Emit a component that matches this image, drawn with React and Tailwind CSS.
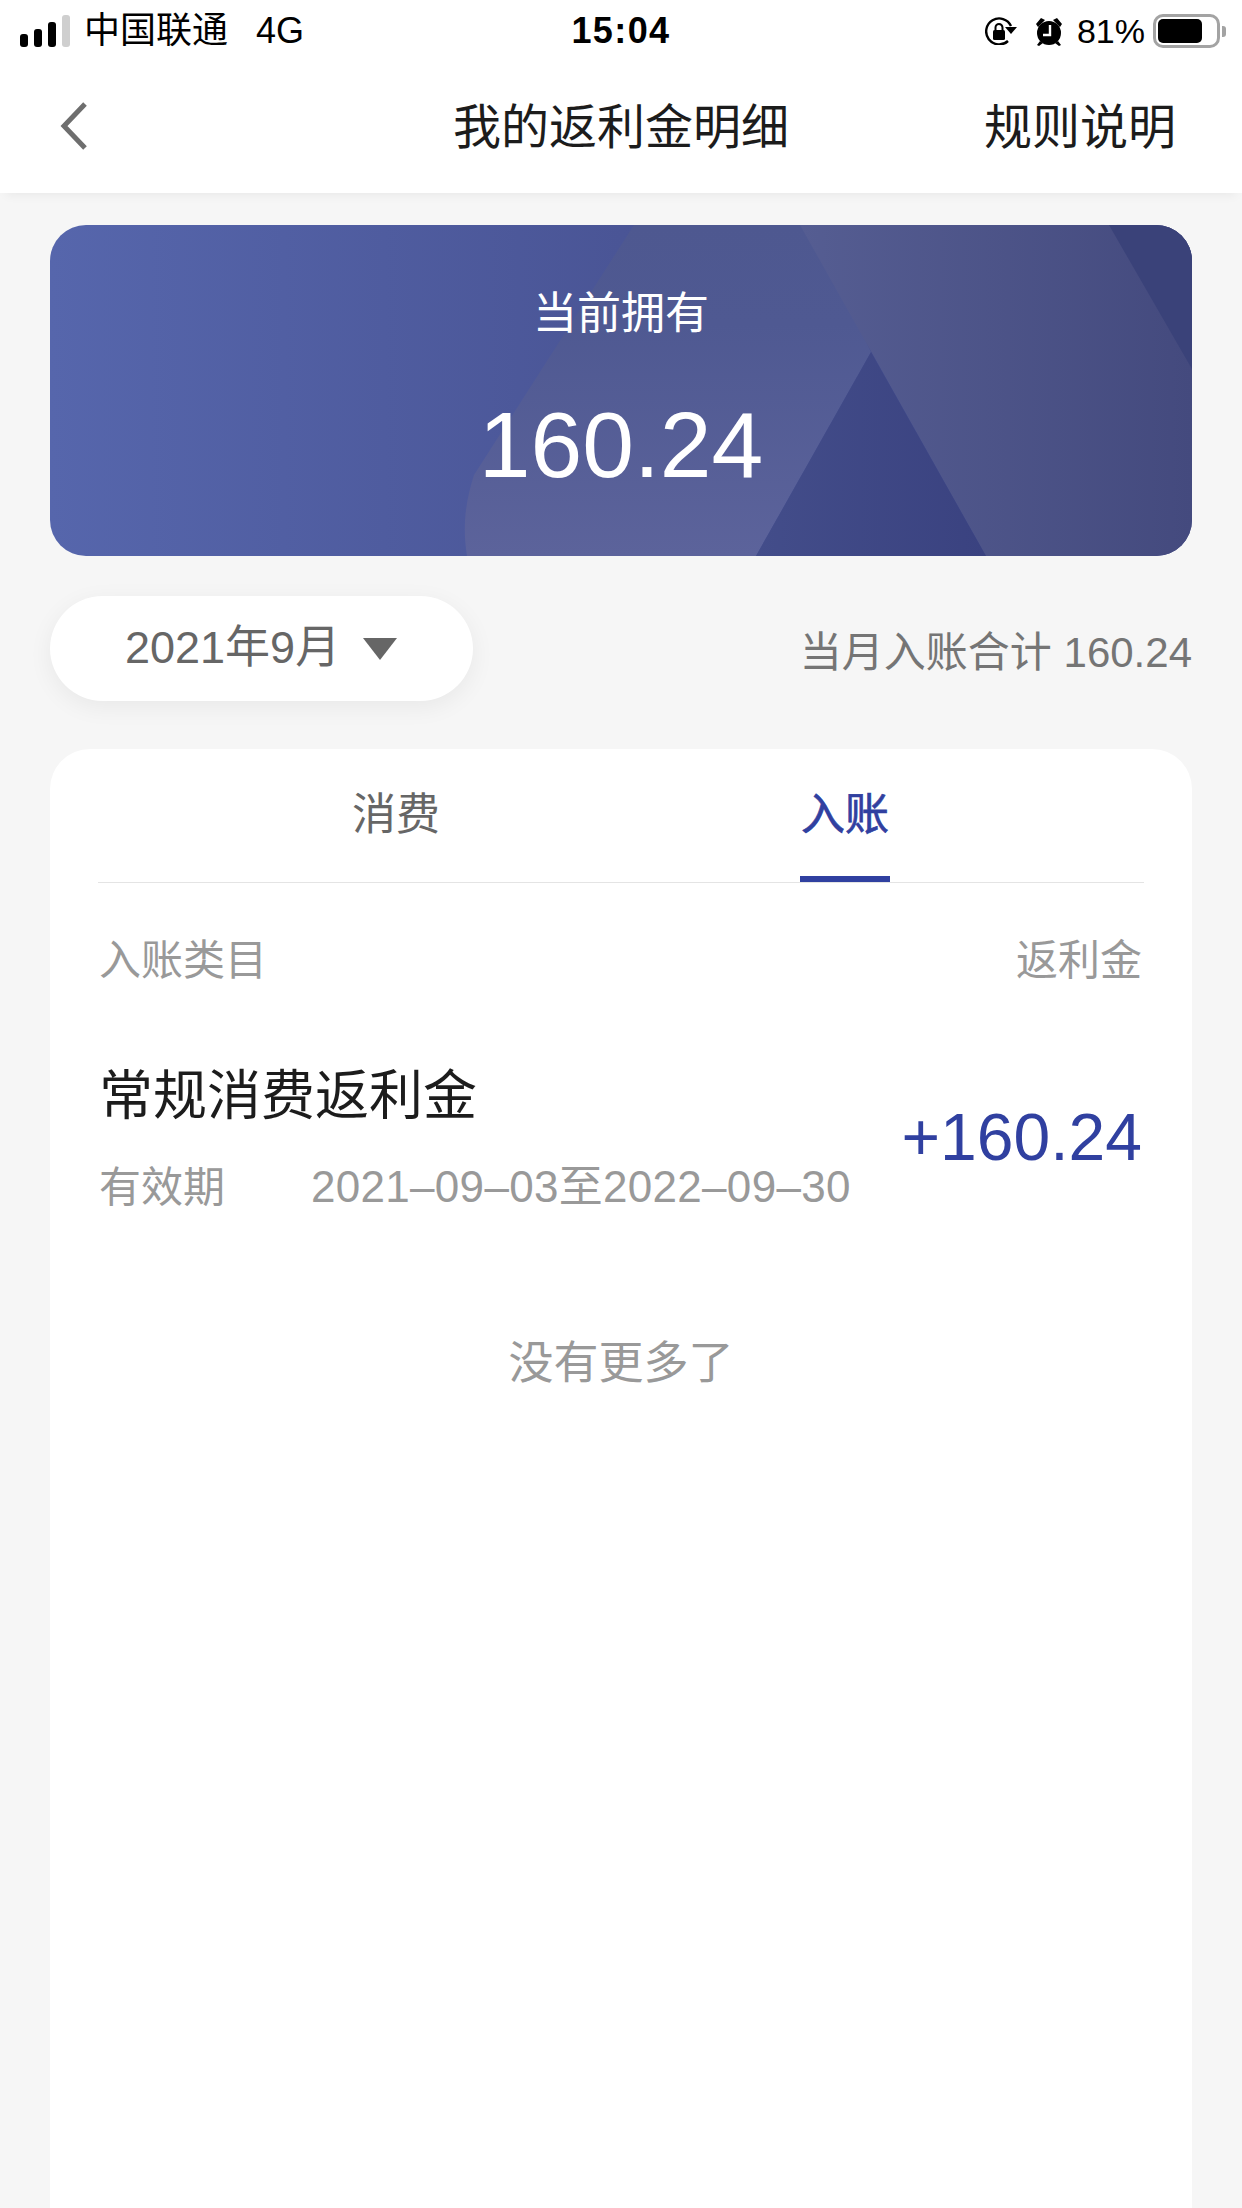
import React from 'react';

const cjk = { fontFamily: '"Liberation Sans", "Noto Sans CJK SC", sans-serif' };

const StatusBar = () => (
    <div className="h-[62px] bg-white grid grid-cols-[1fr_auto_1fr] items-center text-black text-[36px] leading-none">
        <div className="flex items-center">
            <div className="flex items-end gap-[6px] ml-[20px] h-[32px]">
                <span className="w-[8px] h-[13px] rounded-[3px] bg-black" />
                <span className="w-[8px] h-[18px] rounded-[3px] bg-black" />
                <span className="w-[8px] h-[25px] rounded-[3px] bg-black" />
                <span className="w-[8px] h-[32px] rounded-[3px] bg-[#cfcfcf]" />
            </div>
            <span className="ml-[14px]">中国联通</span>
            <span className="ml-[28px]">4G</span>
        </div>
        <span className="font-bold tracking-[1.4px]">15:04</span>
        <div className="flex items-center justify-end mr-[16px]">
            <svg width="32" height="28" viewBox="0 0 32 28" fill="none">
                <path d="M23 24A13 13 0 1 1 26 9" stroke="#000" strokeWidth="2.4" />
                <path d="M20 10h12l-6 7z" fill="#000" />
                <rect x="8" y="13" width="12" height="10" rx="1.5" fill="#000" />
                <path d="M10.5 13v-2.5a3.5 3.5 0 0 1 7 0V13" stroke="#000" strokeWidth="2" />
            </svg>
            <svg className="ml-[18px]" width="28" height="29" viewBox="0 0 28 29">
                <circle cx="14" cy="16" r="12" fill="#000" />
                <path d="M1 7l5-6 4 2-7 7zM27 7l-5-6-4 2 7 7zM5 24l-3 4 2 1 4-3zM23 24l3 4-2 1-4-3z" fill="#000" />
                <path d="M15 8v10H8" stroke="#fff" strokeWidth="2.4" fill="none" />
            </svg>
            <span className="ml-[14px] text-[34px]">81%</span>
            <div className="ml-[8px] w-[67px] h-[34px] rounded-[10px] border-[3px] border-[#a3a3a3] p-[2px]">
                <div className="w-[44px] h-full rounded-[5px] bg-black" />
            </div>
            <span className="ml-[2px] w-[4px] h-[11px] rounded-r-[3px] bg-[#a3a3a3]" />
        </div>
    </div>
);

const NavBar = () => (
    <div className="h-[131px] bg-white grid grid-cols-[1fr_auto_1fr] items-center text-[48px] leading-none text-[#1c1c1c] shadow-[0_8px_10px_-6px_rgba(0,0,0,0.06)]">
        <svg className="ml-[60px] mb-[3px]" width="28" height="50" viewBox="0 0 28 50" fill="none">
            <path d="M25 3L4 25l21 22" stroke="#6e6e6e" strokeWidth="5" />
        </svg>
        <span>我的返利金明细</span>
        <span className="justify-self-end mr-[66px]">规则说明</span>
    </div>
);

const BalanceCard = () => (
    <div className="relative h-[331px] mx-[50px] mt-[32px] rounded-[36px] overflow-hidden bg-gradient-to-r from-[#5666ac] via-[#4a5596] to-[#3b4585] text-white text-center">
        <svg className="absolute inset-0" width="1142" height="331" viewBox="0 0 1142 331" preserveAspectRatio="none">
            <defs>
                <linearGradient id="lightA" x1="0" x2="0" y1="1" y2="0">
                    <stop offset="0" stopColor="#5c639b" />
                    <stop offset="0.7" stopColor="#4f5992" />
                    <stop offset="1" stopColor="#4e5890" />
                </linearGradient>
                <linearGradient id="lightB" x1="0" x2="1" y1="0" y2="0">
                    <stop offset="0" stopColor="#555d92" />
                    <stop offset="1" stopColor="#444a7e" />
                </linearGradient>
                <linearGradient id="darkA" x1="0" x2="1" y1="0" y2="0">
                    <stop offset="0" stopColor="#434d8a" />
                    <stop offset="1" stopColor="#3a4280" />
                </linearGradient>
            </defs>
            <path d="M584 0H760L821 127L706 331H417C412 300 416 275 424 250Z" fill="url(#lightA)" />
            <path d="M750 0H1142V331H936Z" fill="url(#lightB)" />
            <path d="M821 127L936 331H706Z" fill="url(#darkA)" />
            <path d="M1059 0H1142V144Z" fill="#3a4279" />
        </svg>
        <div className="relative flex flex-col items-center">
            <span className="mt-[67px] text-[44px] leading-none">当前拥有</span>
            <span className="mt-[63px] text-[93px] leading-none">160.24</span>
        </div>
    </div>
);

const MonthRow = () => (
    <div className="flex items-center justify-between mx-[50px] mt-[40px]">
        <div className="w-[423px] h-[105px] rounded-full bg-white shadow-[0_6px_24px_rgba(0,0,0,0.06)] flex items-center pl-[75px] pb-[3px] text-[#666] text-[45px] leading-none">
            2021年9月
            <svg className="ml-[22px] mt-[3px]" width="36" height="24" viewBox="0 0 36 24">
                <path d="M1 1h34L18 23z" fill="#666" />
            </svg>
        </div>
        <span className="text-[42px] leading-none text-[#757575] pt-[8px]">当月入账合计 160.24</span>
    </div>
);

const DetailPanel = () => (
    <div className="mx-[50px] mt-[48px] h-[1459px] bg-white rounded-t-[40px] px-[48px]">
        <div className="flex h-[134px] px-[73px] border-b border-[#e4e4e4] text-[44px] leading-none">
            <div className="flex-1 flex justify-center pt-[44px] text-[#666]">消费</div>
            <div className="flex-1 flex justify-center">
                <div className="w-[90px] h-[133px] mr-[2px] pt-[44px] text-center text-[#3040a0] [-webkit-text-stroke:0.7px_#3040a0] border-b-[6px] border-[#3040a0]">入账</div>
            </div>
        </div>
        <div className="flex justify-between text-[42px] leading-none text-[#999] pt-[57px] pl-[1px] pr-[2px]">
            <span>入账类目</span>
            <span>返利金</span>
        </div>
        <div className="flex items-center justify-between mt-[87px] pl-[1px]">
            <div>
                <div className="text-[54px] leading-none text-[#1c1c1c]">常规消费返利金</div>
                <div className="flex items-baseline text-[42px] leading-none text-[#999] mt-[42px]">
                    <span className="w-[212px]">有效期</span>
                    <span className="text-[44px] tracking-[0.3px]">2021–09–03至2022–09–30</span>
                </div>
            </div>
            <span className="text-[66px] leading-none text-[#3040a0] mr-[2px] mb-[4px]">+160.24</span>
        </div>
        <div className="text-center text-[45px] leading-none text-[#999] mt-[132px]">没有更多了</div>
    </div>
);

const App = () => (
    <div className="w-[1242px] h-[2208px] overflow-hidden bg-[#f6f6f6]" style={cjk}>
        <StatusBar />
        <NavBar />
        <BalanceCard />
        <MonthRow />
        <DetailPanel />
    </div>
);

export default App;
